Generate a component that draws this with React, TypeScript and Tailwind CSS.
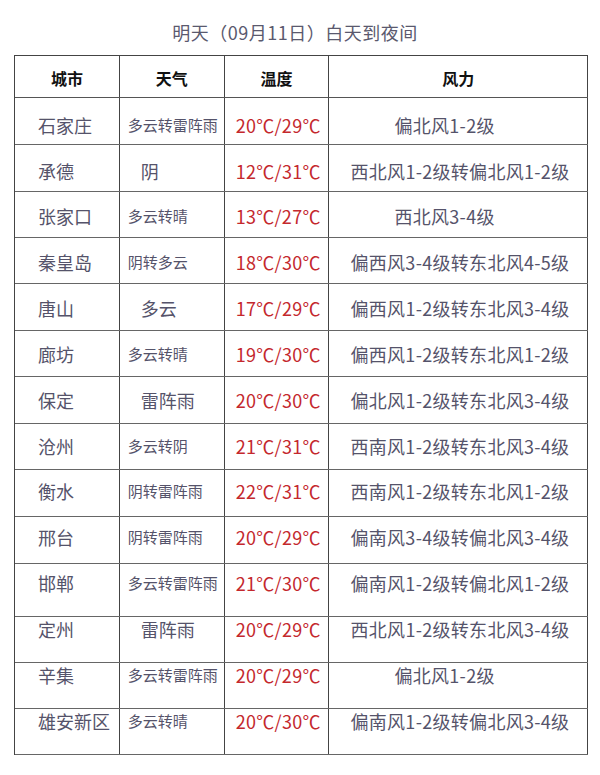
import React from "react";

type Row = {
  city: string;
  weather: string;
  big: boolean;
  temp: string;
  wind: string;
  short: boolean;
  h: string;
  pt: string;
};

const rows: Row[] = [
  { city: "石家庄", weather: "多云转雷阵雨", big: false, temp: "20℃/29℃", wind: "偏北风1-2级", short: true, h: "h-[47px]", pt: "pt-[15px]" },
  { city: "承德", weather: "阴", big: true, temp: "12℃/31℃", wind: "西北风1-2级转偏北风1-2级", short: false, h: "h-[47px]", pt: "pt-[14px]" },
  { city: "张家口", weather: "多云转晴", big: false, temp: "13℃/27℃", wind: "西北风3-4级", short: true, h: "h-[46px]", pt: "pt-[12px]" },
  { city: "秦皇岛", weather: "阴转多云", big: false, temp: "18℃/30℃", wind: "偏西风3-4级转东北风4-5级", short: false, h: "h-[46px]", pt: "pt-[12px]" },
  { city: "唐山", weather: "多云", big: true, temp: "17℃/29℃", wind: "偏西风1-2级转东北风3-4级", short: false, h: "h-[47px]", pt: "pt-[12px]" },
  { city: "廊坊", weather: "多云转晴", big: false, temp: "19℃/30℃", wind: "偏西风1-2级转东北风1-2级", short: false, h: "h-[46px]", pt: "pt-[11px]" },
  { city: "保定", weather: "雷阵雨", big: true, temp: "20℃/30℃", wind: "偏北风1-2级转东北风3-4级", short: false, h: "h-[47px]", pt: "pt-[11px]" },
  { city: "沧州", weather: "多云转阴", big: false, temp: "21℃/31℃", wind: "西南风1-2级转东北风3-4级", short: false, h: "h-[46px]", pt: "pt-[10px]" },
  { city: "衡水", weather: "阴转雷阵雨", big: false, temp: "22℃/31℃", wind: "西南风1-2级转东北风1-2级", short: false, h: "h-[47px]", pt: "pt-[9px]" },
  { city: "邢台", weather: "阴转雷阵雨", big: false, temp: "20℃/29℃", wind: "偏南风3-4级转偏北风3-4级", short: false, h: "h-[47px]", pt: "pt-[8px]" },
  { city: "邯郸", weather: "多云转雷阵雨", big: false, temp: "21℃/30℃", wind: "偏南风1-2级转偏北风1-2级", short: false, h: "h-[53px]", pt: "pt-[7px]" },
  { city: "定州", weather: "雷阵雨", big: true, temp: "20℃/29℃", wind: "西北风1-2级转东北风3-4级", short: false, h: "h-[46px]", pt: "pt-[0px]" },
  { city: "辛集", weather: "多云转雷阵雨", big: false, temp: "20℃/29℃", wind: "偏北风1-2级", short: true, h: "h-[46px]", pt: "pt-[0px]" },
  { city: "雄安新区", weather: "多云转晴", big: false, temp: "20℃/30℃", wind: "偏南风1-2级转偏北风3-4级", short: false, h: "h-[46px]", pt: "pt-[0px]" },
];

const font = { fontFamily: '"Noto Sans CJK SC", "Noto Sans", sans-serif' };

export default function App() {
  return (
    <div className="w-[600px] h-[775px] bg-white" style={font}>
      <div className="h-[55px] flex items-start pt-[20px] justify-center pr-[10px]">
        <div className="text-[18px] leading-[24px] text-[#5a596e] tracking-[0.5px]">
          明天（09月11日）白天到夜间
        </div>
      </div>
      <div className="ml-[14px] w-[574px] border-l border-t border-[#444]">
        <div className="flex h-[42px] border-b border-[#555] text-[16px] font-semibold text-[#111]">
          <div className="w-[105px] border-r border-[#444] flex items-center justify-center pt-[3px]">城市</div>
          <div className="w-[105px] border-r border-[#444] flex items-center justify-center pt-[3px]">天气</div>
          <div className="w-[105px] border-r border-[#444] flex items-center justify-center pt-[3px]">温度</div>
          <div className="w-[259px] border-r border-[#444] flex items-center justify-center pt-[3px]">风力</div>
        </div>
        {rows.map((r) => (
          <div key={r.city} className={`flex border-b border-[#666] text-[#55536a] ${r.h}`}>
            <div className={`w-[105px] border-r border-[#444] pl-[23px] ${r.pt}`}>
              <div className="h-[24px] flex items-center text-[18px] whitespace-nowrap">{r.city}</div>
            </div>
            <div className={`w-[105px] border-r border-[#444] ${r.pt} ${r.big ? "pl-[21px]" : "pl-[8px]"}`}>
              <div className={`h-[24px] flex items-center whitespace-nowrap ${r.big ? "text-[18px]" : "text-[15px]"}`}>{r.weather}</div>
            </div>
            <div className={`w-[105px] border-r border-[#444] pl-[11px] ${r.pt}`}>
              <div className="h-[24px] flex items-center text-[18px] text-[#c4282d] whitespace-nowrap tracking-[0.3px]">{r.temp}</div>
            </div>
            <div className={`w-[259px] border-r border-[#444] ${r.pt} ${r.short ? "pl-[65px]" : "pl-[21px]"}`}>
              <div className="h-[24px] flex items-center text-[18px] whitespace-nowrap tracking-[0.3px]">{r.wind}</div>
            </div>
          </div>
        ))}
      </div>
    </div>
  );
}
